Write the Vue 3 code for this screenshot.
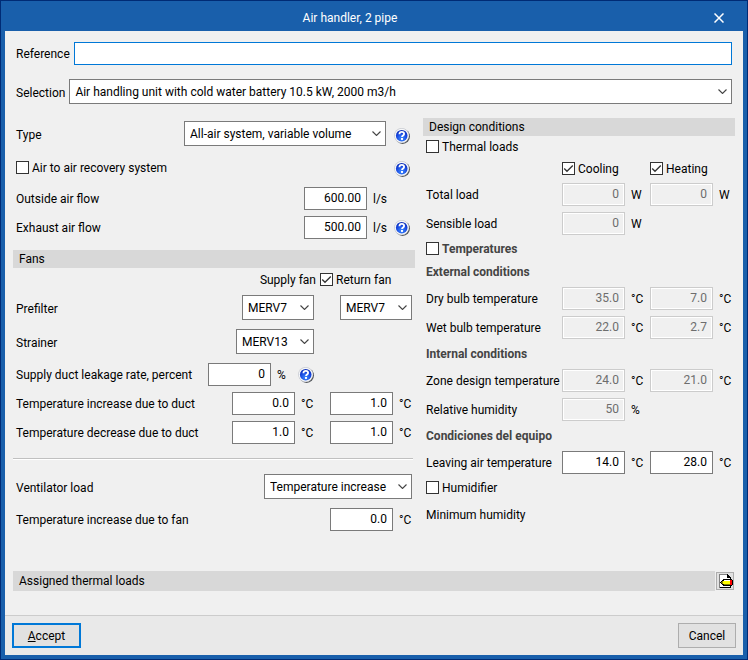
<script setup>
	import { reactive, ref } from 'vue';

	const reference = ref('');
	const selection = ref('Air handling unit with cold water battery 10.5 kW, 2000 m3/h');

	const unit = reactive({
		type: 'All-air system, variable volume',
		recovery: false,
		outsideFlow: '600.00',
		exhaustFlow: '500.00',
	});

	const fans = reactive({
		returnFan: true,
		supplyPrefilter: 'MERV7',
		returnPrefilter: 'MERV7',
		strainer: 'MERV13',
		leakage: '0',
		load: 'Temperature increase',
		fanIncrease: '0.0',
	});

	const ducts = reactive([
		{ id: 'increase', label: 'Temperature increase due to duct', values: ['0.0', '1.0'] },
		{ id: 'decrease', label: 'Temperature decrease due to duct', values: ['1.0', '1.0'] },
	]);

	const design = reactive({
		thermalLoads: false,
		cooling: true,
		heating: true,
		temperatures: false,
		humidifier: false,
	});

	const loads = reactive([
		{ id: 'total', label: 'Total load', unit: 'W', values: ['0', '0'] },
		{ id: 'sensible', label: 'Sensible load', unit: 'W', values: ['0'] },
	]);

	const conditions = reactive([
		{
			title: 'External conditions',
			disabled: true,
			rows: [
				{ id: 'dry', label: 'Dry bulb temperature', unit: '°C', values: ['35.0', '7.0'] },
				{ id: 'wet', label: 'Wet bulb temperature', unit: '°C', values: ['22.0', '2.7'] },
			],
		},
		{
			title: 'Internal conditions',
			disabled: true,
			rows: [
				{ id: 'zone', label: 'Zone design temperature', unit: '°C', values: ['24.0', '21.0'] },
				{ id: 'humidity', label: 'Relative humidity', unit: '%', values: ['50'] },
			],
		},
		{
			title: 'Condiciones del equipo',
			disabled: false,
			rows: [{ id: 'leaving', label: 'Leaving air temperature', unit: '°C', values: ['14.0', '28.0'] }],
		},
	]);

	const filters = ['MERV7', 'MERV13'];
</script>

<template>
	<form class="window" @submit.prevent>
		<svg class="symbols" aria-hidden="true">
			<defs>
				<radialGradient id="ball" cx="50%" cy="75%" r="75%">
					<stop offset="0" stop-color="#3f8dff" />
					<stop offset="0.6" stop-color="#1747e0" />
					<stop offset="1" stop-color="#0a2bb0" />
				</radialGradient>
			</defs>
			<symbol id="help" viewBox="0 0 16 16">
				<circle cx="8.6" cy="8.6" r="7.4" fill="#55585c" />
				<circle cx="7.6" cy="7.6" r="7.5" fill="#c9ccd2" />
				<circle cx="7.7" cy="7.7" r="6.9" fill="#f7f8fa" />
				<circle cx="7.7" cy="7.7" r="5.8" fill="url(#ball)" />
				<path d="M5.4 6.2C5.5 4.5 6.5 3.9 7.8 3.9s2.3.8 2.3 2c0 1.5-2.1 1.6-2.1 3.1" fill="none" stroke="#fff" stroke-width="1.8" />
				<rect x="7" y="10" width="2" height="1.9" fill="#fff" />
			</symbol>
		</svg>

		<header class="titlebar">
			<h1>Air handler, 2 pipe</h1>
			<button type="button" class="close" aria-label="Close">
				<svg width="10" height="10" viewBox="0 0 10 10">
					<path d="M.5.5l9 9M9.5.5l-9 9" stroke="#fff" stroke-width="1.5" />
				</svg>
			</button>
		</header>

		<main class="content">
			<div class="row top">
				<label for="reference">Reference</label>
				<input id="reference" v-model="reference" type="text" class="reference" />
			</div>
			<div class="row top tall">
				<label for="selection">Selection</label>
				<select id="selection" v-model="selection">
					<option>Air handling unit with cold water battery 10.5 kW, 2000 m3/h</option>
				</select>
			</div>

			<div class="columns">
				<section class="left">
					<div class="stack general">
						<div class="row tall">
							<label for="type" class="name">Type</label>
							<select id="type" v-model="unit.type" class="type">
								<option>All-air system, variable volume</option>
							</select>
							<button type="button" class="help" aria-label="Help"><svg><use href="#help" /></svg></button>
						</div>
						<div class="row tall">
							<label class="check name"><input v-model="unit.recovery" type="checkbox" />Air to air recovery system</label>
							<button type="button" class="help" aria-label="Help"><svg><use href="#help" /></svg></button>
						</div>
						<div class="stack tight">
							<div class="row">
								<label for="outside" class="name">Outside air flow</label>
								<input id="outside" v-model="unit.outsideFlow" type="text" class="number" />
								<span class="unit">l/s</span>
								<span class="help"></span>
							</div>
							<div class="row">
								<label for="exhaust" class="name">Exhaust air flow</label>
								<input id="exhaust" v-model="unit.exhaustFlow" type="text" class="number" />
								<span class="unit">l/s</span>
								<button type="button" class="help" aria-label="Help"><svg><use href="#help" /></svg></button>
							</div>
						</div>
					</div>

					<h2 class="fans-title">Fans</h2>
					<div class="row fan-names">
						<span>Supply fan</span>
						<label class="check return"><input v-model="fans.returnFan" type="checkbox" />Return fan</label>
					</div>
					<div class="stack">
						<div class="row tall">
							<label for="prefilter" class="name">Prefilter</label>
							<select id="prefilter" v-model="fans.supplyPrefilter" class="filter">
								<option v-for="f in filters" :key="f">{{ f }}</option>
							</select>
							<div class="cell">
								<select v-model="fans.returnPrefilter" class="filter" aria-label="Return prefilter">
									<option v-for="f in filters" :key="f">{{ f }}</option>
								</select>
							</div>
						</div>
						<div class="row tall">
							<label for="strainer" class="name">Strainer</label>
							<select id="strainer" v-model="fans.strainer" class="strainer">
								<option v-for="f in filters" :key="f">{{ f }}</option>
							</select>
							<div class="cell"></div>
						</div>
						<div class="stack tight">
							<div class="row">
								<label for="leakage" class="name">Supply duct leakage rate, percent</label>
								<input id="leakage" v-model="fans.leakage" type="text" class="number" />
								<span class="unit">%</span>
								<button type="button" class="help" aria-label="Help"><svg><use href="#help" /></svg></button>
								<div class="cell"></div>
							</div>
							<div v-for="duct in ducts" :key="duct.id" class="row">
								<label :for="duct.id + 0" class="name">{{ duct.label }}</label>
								<div v-for="(v, i) in duct.values" :key="i" class="cell">
									<input :id="duct.id + i" v-model="duct.values[i]" type="text" class="number" :aria-label="duct.label" />
									<span class="unit">°C</span>
								</div>
							</div>
						</div>
					</div>

					<hr />
					<div class="stack">
						<div class="row tall">
							<label for="load" class="name">Ventilator load</label>
							<select id="load" v-model="fans.load" class="load">
								<option>Temperature increase</option>
							</select>
						</div>
						<div class="row">
							<label for="fan-increase" class="name">Temperature increase due to fan</label>
							<input id="fan-increase" v-model="fans.fanIncrease" type="text" class="number" />
							<span class="unit">°C</span>
						</div>
					</div>
				</section>

				<section class="right">
					<h2>Design conditions</h2>
					<div class="line thermal">
						<label class="check"><input v-model="design.thermalLoads" type="checkbox" />Thermal loads</label>
					</div>
					<div class="pair modes">
						<span></span>
						<label class="check"><input v-model="design.cooling" type="checkbox" />Cooling</label>
						<label class="check"><input v-model="design.heating" type="checkbox" />Heating</label>
					</div>
					<div class="stack tight">
						<div v-for="row in loads" :key="row.id" class="pair">
							<label :for="row.id + 0">{{ row.label }}</label>
							<div v-for="(v, i) in row.values" :key="i" class="value">
								<input :id="row.id + i" v-model="row.values[i]" type="text" class="number" :aria-label="row.label" disabled />
								<span class="unit">{{ row.unit }}</span>
							</div>
						</div>
					</div>
					<div class="line">
						<label class="check strong"><input v-model="design.temperatures" type="checkbox" />Temperatures</label>
					</div>
					<template v-for="group in conditions" :key="group.title">
						<h3>{{ group.title }}</h3>
						<div class="stack tight">
							<div v-for="row in group.rows" :key="row.id" class="pair">
								<label :for="row.id + 0">{{ row.label }}</label>
								<div v-for="(v, i) in row.values" :key="i" class="value">
									<input
										:id="row.id + i"
										v-model="row.values[i]"
										type="text"
										class="number"
										:aria-label="row.label"
										:disabled="group.disabled"
									/>
									<span class="unit">{{ row.unit }}</span>
								</div>
							</div>
						</div>
					</template>
					<div class="line">
						<label class="check"><input v-model="design.humidifier" type="checkbox" />Humidifier</label>
					</div>
					<div class="line">Minimum humidity</div>
				</section>
			</div>

			<div class="assigned">
				<h2>Assigned thermal loads</h2>
				<button type="button" class="edit" aria-label="Edit assigned thermal loads">
					<svg width="16" height="16" viewBox="0 0 16 16" shape-rendering="crispEdges">
						<path d="M2 1h8l4 4v10H2z" fill="#fff" />
						<path d="M2 1h8v1H3v13H2z" fill="#808080" />
						<path d="M10 1h1v1h1v1h1v1h1v11H3v-1h10V5h-3z" fill="#000" />
						<path d="M3 9h1V8h1V7h1V6h9v1h1v5h-1v1H6v-1H5v-1H4v-1H3z" fill="#000" />
						<path d="M4 9h1V8h1v3H5v-1H4z" fill="#808000" />
						<path d="M6 8h1V7h6v5H7v-1H6z" fill="#ff0" />
						<path d="M13 7h2v5h-2z" fill="#f00" />
						<path d="M7 7h6v1H7z" fill="#fff" />
						<path d="M7 11h6v1H7z" fill="#808000" />
					</svg>
				</button>
			</div>
		</main>

		<footer class="footer">
			<button type="submit" class="action accept"><span><u>A</u>ccept</span></button>
			<button type="button" class="action">Cancel</button>
		</footer>
	</form>
</template>

<style>
	body {
		margin: 0;
	}
</style>

<style scoped>
	*,
	*::before,
	*::after {
		box-sizing: border-box;
	}
	.window {
		display: flex;
		flex-direction: column;
		min-height: 100vh;
		border: 1px solid #002b75;
		background: #195fab;
		padding: 0 4px 4px;
		font-family: Roboto, 'Open Sans', sans-serif;
		font-size: 12px;
		line-height: 16px;
		color: #000;
	}
	.symbols {
		position: absolute;
		width: 0;
		height: 0;
	}
	h1,
	h2,
	h3 {
		margin: 0;
		font-size: 12px;
		font-weight: normal;
	}
	input,
	select,
	button {
		margin: 0;
		font: inherit;
		color: inherit;
		border-radius: 0;
	}
	label,
	.unit {
		white-space: nowrap;
	}

	.titlebar {
		display: flex;
		align-items: center;
		height: 30px;
		padding-top: 4px;
		color: #fff;
	}
	.titlebar h1 {
		flex: 1;
		text-align: center;
	}
	.close {
		display: flex;
		align-items: center;
		justify-content: center;
		width: 48px;
		height: 26px;
		padding: 0;
		border: 0;
		background: none;
	}

	.content {
		flex: 1;
		display: flex;
		flex-direction: column;
		padding: 11px 8px 24px;
		background: #f0f0f0;
	}
	.row {
		display: flex;
		align-items: center;
		min-height: 23px;
		padding: 0 3px;
	}
	.tall {
		height: 25px;
	}
	.tall label {
		padding-top: 2px;
	}
	.tall .help {
		margin-top: 4px;
	}
	.top {
		gap: 4px;
		margin-bottom: 14px;
	}
	.top input,
	.top select {
		flex: 1;
		min-width: 0;
	}
	.name {
		flex: 1;
	}

	input[type='text'] {
		height: 23px;
		padding: 0 5px 2px;
		border: 1px solid #7a7a7a;
		background: #fff;
		outline: none;
	}
	input.reference {
		border-color: #0078d7;
	}
	.number {
		width: 63px;
		text-align: right;
	}
	input[type='text']:disabled {
		border-color: #ccc;
		background: #f0f0f0;
		box-shadow: inset 0 0 0 1px #fff;
		color: #6d6d6d;
	}
	select {
		appearance: none;
		height: 25px;
		padding: 0 16px 0 5px;
		border: 1px solid #7a7a7a;
		background: #fff url("data:image/svg+xml,%3Csvg xmlns='http://www.w3.org/2000/svg' width='9' height='5'%3E%3Cpath d='M.5.5l4 4 4-4' fill='none' stroke='%23444' stroke-width='1.1'/%3E%3C/svg%3E") no-repeat right 4px center;
		outline: none;
	}
	input[type='checkbox'] {
		appearance: none;
		width: 13px;
		height: 13px;
		border: 1px solid #333;
		background: #fff;
	}
	input[type='checkbox']:checked {
		background: #fff url("data:image/svg+xml,%3Csvg xmlns='http://www.w3.org/2000/svg' width='11' height='11'%3E%3Cpath d='M1.2 5.5l2.8 2.8 5.8-5.8' fill='none' stroke='%23333' stroke-width='1.3'/%3E%3C/svg%3E") no-repeat center;
	}
	.check {
		display: flex;
		align-items: center;
		gap: 3px;
	}
	.unit {
		width: 19px;
		padding-left: 6px;
	}
	.help {
		flex: none;
		width: 16px;
		height: 16px;
		margin-left: 8px;
		padding: 0;
		border: 0;
		background: none;
	}
	.help svg {
		display: block;
		width: 16px;
		height: 16px;
	}

	.columns {
		display: grid;
		grid-template-columns: minmax(0, 402fr) minmax(0, 312fr);
		gap: 8px;
	}
	.stack {
		display: flex;
		flex-direction: column;
		gap: 9px;
	}
	.tight {
		gap: 6px;
	}
	h2 {
		height: 18px;
		padding-left: 6px;
		line-height: 18px;
		background: #d8d8d8;
	}

	.left {
		padding-top: 3px;
	}
	.general {
		gap: 8px;
	}
	.general .row {
		padding-right: 5px;
	}
	.type {
		width: 202px;
	}
	.fans-title {
		margin-top: 11px;
	}
	.fan-names {
		justify-content: flex-end;
		gap: 4px;
		margin-bottom: 4px;
	}
	.return {
		width: 92px;
	}
	.cell {
		display: flex;
		align-items: center;
		justify-content: flex-end;
		width: 98px;
	}
	.filter {
		width: 72px;
	}
	.strainer {
		width: 78px;
	}
	.load {
		width: 148px;
	}
	hr {
		height: 2px;
		margin: 14px 2px 14px 0;
		border: 0;
		border-top: 1px solid #c0c0c0;
		background: #fff;
	}

	.line {
		display: flex;
		align-items: center;
		height: 27px;
		padding-left: 3px;
	}
	.thermal {
		height: 21px;
	}
	.pair {
		display: grid;
		grid-template-columns: minmax(0, 1fr) 88px 82px;
		align-items: center;
		min-height: 23px;
		padding: 0 3px;
	}
	.modes {
		margin-bottom: 3px;
	}
	.value {
		display: flex;
		align-items: center;
	}
	h3 {
		padding-left: 3px;
		line-height: 30px;
	}
	.line + h3 {
		line-height: 21px;
		margin-bottom: 4px;
	}
	h3,
	.strong {
		font-weight: bold;
		color: #444;
	}

	.assigned {
		display: flex;
		align-items: center;
		gap: 1px;
		margin-top: auto;
		padding-right: 1px;
	}
	.assigned h2 {
		flex: 1;
		height: 20px;
		line-height: 20px;
	}
	.edit {
		width: 18px;
		height: 18px;
		padding: 0;
		border: 1px solid #adadad;
		background: #e1e1e1;
	}
	.edit svg {
		display: block;
	}

	.footer {
		display: flex;
		justify-content: space-between;
		padding: 7px;
		border-top: 1px solid #ccc;
		background: #e9e9e9;
	}
	.action {
		height: 25px;
		min-width: 58px;
		padding: 0;
		border: 1px solid #adadad;
		background: #e1e1e1;
	}
	.accept {
		min-width: 69px;
		border: 2px solid #0078d7;
	}
</style>
